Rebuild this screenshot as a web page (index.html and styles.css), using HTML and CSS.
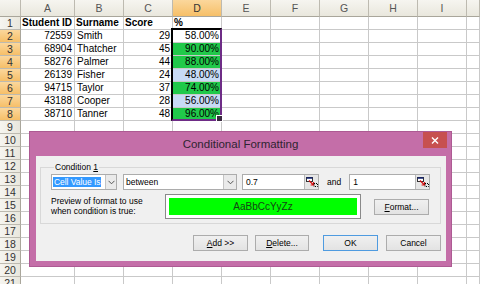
FILE: index.html
```html
<!DOCTYPE html>
<html lang="en">
<head>
    <meta charset="UTF-8">
    <meta name="viewport" content="width=device-width, initial-scale=1.0">
    <title>Conditional Formatting</title>
    <link rel="stylesheet" href="styles.css">
</head>
<body>
<div class="sheet">
    <div class="ch corner"></div><div class="ch">A</div><div class="ch">B</div><div class="ch">C</div><div class="ch hl">D</div><div class="ch">E</div><div class="ch">F</div><div class="ch">G</div><div class="ch">H</div><div class="ch">I</div><div class="ch"></div>
    <div class="rh">1</div><div class="bold">Student ID</div><div class="bold">Surname</div><div class="bold">Score</div><div class="bold">%</div><div></div><div></div><div></div><div></div><div></div><div></div>
    <div class="rh hl">2</div><div class="num">72559</div><div>Smith</div><div class="num">29</div><div class="num">58.00%</div><div></div><div></div><div></div><div></div><div></div><div></div>
    <div class="rh hl">3</div><div class="num">68904</div><div>Thatcher</div><div class="num">45</div><div class="num green">90.00%</div><div></div><div></div><div></div><div></div><div></div><div></div>
    <div class="rh hl">4</div><div class="num">58276</div><div>Palmer</div><div class="num">44</div><div class="num green">88.00%</div><div></div><div></div><div></div><div></div><div></div><div></div>
    <div class="rh hl">5</div><div class="num">26139</div><div>Fisher</div><div class="num">24</div><div class="num blue">48.00%</div><div></div><div></div><div></div><div></div><div></div><div></div>
    <div class="rh hl">6</div><div class="num">94715</div><div>Taylor</div><div class="num">37</div><div class="num green">74.00%</div><div></div><div></div><div></div><div></div><div></div><div></div>
    <div class="rh hl">7</div><div class="num">43188</div><div>Cooper</div><div class="num">28</div><div class="num blue">56.00%</div><div></div><div></div><div></div><div></div><div></div><div></div>
    <div class="rh hl">8</div><div class="num">38710</div><div>Tanner</div><div class="num">48</div><div class="num green">96.00%</div><div></div><div></div><div></div><div></div><div></div><div></div>
    <div class="rh">9</div><div></div><div></div><div></div><div></div><div></div><div></div><div></div><div></div><div></div><div></div>
    <div class="rh">10</div><div></div><div></div><div></div><div></div><div></div><div></div><div></div><div></div><div></div><div></div>
    <div class="rh">11</div><div></div><div></div><div></div><div></div><div></div><div></div><div></div><div></div><div></div><div></div>
    <div class="rh">12</div><div></div><div></div><div></div><div></div><div></div><div></div><div></div><div></div><div></div><div></div>
    <div class="rh">13</div><div></div><div></div><div></div><div></div><div></div><div></div><div></div><div></div><div></div><div></div>
    <div class="rh">14</div><div></div><div></div><div></div><div></div><div></div><div></div><div></div><div></div><div></div><div></div>
    <div class="rh">15</div><div></div><div></div><div></div><div></div><div></div><div></div><div></div><div></div><div></div><div></div>
    <div class="rh">16</div><div></div><div></div><div></div><div></div><div></div><div></div><div></div><div></div><div></div><div></div>
    <div class="rh">17</div><div></div><div></div><div></div><div></div><div></div><div></div><div></div><div></div><div></div><div></div>
    <div class="rh">18</div><div></div><div></div><div></div><div></div><div></div><div></div><div></div><div></div><div></div><div></div>
    <div class="rh">19</div><div></div><div></div><div></div><div></div><div></div><div></div><div></div><div></div><div></div><div></div>
    <div class="rh">20</div><div></div><div></div><div></div><div></div><div></div><div></div><div></div><div></div><div></div><div></div>
    <div class="rh">21</div><div></div><div></div><div></div><div></div><div></div><div></div><div></div><div></div><div></div><div></div>
    <span class="selection"></span>
</div>

<div class="dialog">
    <div class="titlebar">
        <span class="title">Conditional Formatting</span>
        <a href="javascript:;" class="close">
            <svg width="8" height="7" viewBox="0 0 8 7"><path d="M1 .5 7 6.5M7 .5 1 6.5" stroke="#fff" stroke-width="1.4"/></svg>
        </a>
    </div>
    <div class="client">
        <fieldset class="group">
            <legend>Condition <u>1</u></legend>
            <div class="cond">
                <div class="combo combo-op">
                    <span class="val"><span class="picked">Cell Value Is</span></span>
                    <span class="drop"><svg width="7" height="5" viewBox="0 0 7 5"><path d="M.5 .8 3.5 3.8 6.5 .8" fill="none" stroke="#555"/></svg></span>
                </div>
                <div class="combo combo-between">
                    <span class="val">between</span>
                    <span class="drop"><svg width="7" height="5" viewBox="0 0 7 5"><path d="M.5 .8 3.5 3.8 6.5 .8" fill="none" stroke="#555"/></svg></span>
                </div>
                <div class="field field-1">
                    <span class="val">0.7</span>
                    <span class="ref">
                        <svg width="12" height="10" viewBox="0 0 12 10"><rect x=".5" y=".5" width="6" height="4" fill="#fff" stroke="#333"/><path d="M.5 1h6" stroke="#102070" stroke-width="1.5"/><path d="M3 3.5 7 7.5M7.6 5v3h-3" fill="none" stroke="#d81010" stroke-width="1.2"/><rect x="8" y="6.5" width="3.5" height="3" fill="none" stroke="#000" stroke-dasharray="1 1"/></svg>
                    </span>
                </div>
                <span class="and">and</span>
                <div class="field field-2">
                    <span class="val">1</span>
                    <span class="ref">
                        <svg width="12" height="10" viewBox="0 0 12 10"><rect x=".5" y=".5" width="6" height="4" fill="#fff" stroke="#333"/><path d="M.5 1h6" stroke="#102070" stroke-width="1.5"/><path d="M3 3.5 7 7.5M7.6 5v3h-3" fill="none" stroke="#d81010" stroke-width="1.2"/><rect x="8" y="6.5" width="3.5" height="3" fill="none" stroke="#000" stroke-dasharray="1 1"/></svg>
                    </span>
                </div>
            </div>
            <div class="preview">
                <div class="plabel">Preview of format to use<br>when condition is true:</div>
                <div class="sample-box"><div class="sample">AaBbCcYyZz</div></div>
                <a href="javascript:;" class="btn btn-format"><u>F</u>ormat...</a>
            </div>
        </fieldset>
        <div class="buttons">
            <a href="javascript:;" class="btn btn-add"><u>A</u>dd &gt;&gt;</a>
            <a href="javascript:;" class="btn btn-delete"><u>D</u>elete...</a>
            <a href="javascript:;" class="btn btn-ok default">OK</a>
            <a href="javascript:;" class="btn btn-cancel">Cancel</a>
        </div>
    </div>
</div>
</body>
</html>
```

FILE: styles.css
```css
*{
    margin: 0;
    padding: 0;
    box-sizing: border-box;
}
body{
    width: 480px;
    height: 284px;
    overflow: hidden;
    position: relative;
    background: #fff;
    font-family: "Liberation Sans", Arial, sans-serif;
}

/* spreadsheet */
.sheet{
    display: grid;
    grid-template-columns: 21px 54px repeat(8, 49px) 13px;
    grid-template-rows: 17px;
    grid-auto-rows: 13px;
    font-size: 10px;
    line-height: 12px;
    color: #000;
    position: relative;
}
.sheet > div{
    border-right: 1px solid #c9c9c9;
    border-bottom: 1px solid #c9c9c9;
    padding: 0 2px;
    white-space: nowrap;
    overflow: hidden;
}
.sheet .ch{
    background: linear-gradient(#f6f5f0, #e9e7dd);
    border-right-color: #bdbab0;
    border-bottom-color: #a9a69b;
    text-align: center;
    color: #555;
    font-size: 10.5px;
    line-height: 16px;
}
.sheet .rh{
    background: linear-gradient(90deg, #f6f5f0, #e9e7dd);
    border-right-color: #a9a69b;
    border-bottom-color: #bdbab0;
    text-align: center;
    color: #333;
    font-size: 10.5px;
    padding: 0;
}
.sheet .hl{
    background: linear-gradient(#fbd79c, #f6bf68);
    color: #333;
}
.sheet .bold{
    font-weight: bold;
    padding-left: 1px;
}
.sheet .num{
    text-align: right;
}
.sheet .green{
    background: #20c94a;
}
.sheet .blue{
    background: #c7dbf5;
}
.selection{
    position: absolute;
    left: 171px;
    top: 28px;
    width: 51px;
    height: 93px;
    border: 2px solid #000;
    border-right-color: #6e2c86;
    border-bottom-color: #6e2c86;
}
.selection::after{
    content: "";
    position: absolute;
    right: -3px;
    bottom: -3px;
    width: 5px;
    height: 5px;
    background: #3a2a40;
    border: 1px solid #fff;
}

/* dialog */
.dialog{
    position: absolute;
    left: 29px;
    top: 131px;
    width: 423px;
    height: 136px;
    background: #c46ea8;
    border: 1px solid #ad5a93;
    display: flex;
    flex-direction: column;
    font-size: 8.5px;
    color: #000;
}
.titlebar{
    height: 24px;
    flex: none;
    display: grid;
    grid-template-columns: 1fr auto 1fr;
}
.title{
    grid-column: 2;
    font-size: 11.5px;
    line-height: 24px;
    color: #2e2430;
}
.close{
    grid-column: 3;
    justify-self: end;
    margin-right: 4px;
    width: 24px;
    height: 16px;
    background: #c75050;
    display: flex;
    align-items: center;
    justify-content: center;
}
.client{
    flex: 1;
    margin: 0 5px 5px 6px;
    padding: 0 5px 0 4px;
    background: #f0f0f0;
}
.group{
    margin-top: 6px;
    border: 1px solid #d8d8d8;
    padding: 2px 0 4px 10px;
}
.group legend{
    margin-left: 3px;
    padding: 0 1px;
    line-height: 10px;
}
.cond{
    display: flex;
    align-items: center;
    height: 16px;
}
.combo, .field{
    display: flex;
    height: 16px;
    background: #fff;
    border: 1px solid #acacac;
}
.val{
    flex: 1;
    padding: 0 2px;
    line-height: 14px;
    white-space: nowrap;
    overflow: hidden;
}
.combo-op{
    width: 66px;
}
.combo-op .val{
    padding: 0 0 0 1px;
}
.picked{
    background: #3399ff;
    color: #fff;
    padding: 0 1px;
    letter-spacing: -0.05px;
}
.combo-between{
    width: 114px;
    margin-left: 6px;
}
.drop{
    flex: none;
    width: 13px;
    border-left: 1px solid #c4c4c4;
    background: #eaeaea;
    display: flex;
    align-items: center;
    justify-content: center;
}
.combo-op .drop{
    width: 11px;
}
.field-1{
    width: 77px;
    margin-left: 5px;
}
.field-2{
    width: 81px;
}
.field .val{
    padding-left: 3px;
}
.ref{
    width: 14px;
    border-left: 1px solid #b8b8b8;
    background: #e6e6e6;
    display: flex;
    align-items: center;
    justify-content: center;
}
.and{
    margin: 0 8px;
    line-height: 14px;
}
.preview{
    display: flex;
    align-items: center;
    height: 25px;
    margin-top: 4px;
}
.plabel{
    width: 114px;
    line-height: 9.5px;
}
.sample-box{
    width: 196px;
    height: 25px;
    background: #fff;
    border: 1px solid #8a8a8a;
    padding: 3px;
}
.sample{
    height: 100%;
    background: #00ff00;
    text-align: center;
    font-size: 10px;
    line-height: 17px;
    color: #144414;
}
.btn{
    display: flex;
    align-items: center;
    justify-content: center;
    width: 55px;
    height: 16px;
    border: 1px solid #acacac;
    background: linear-gradient(#f0f0f0, #e3e3e3);
    color: #000;
    text-decoration: none;
    white-space: nowrap;
}
.btn-format{
    margin-left: 13px;
}
.buttons{
    display: flex;
    justify-content: flex-end;
    margin-top: 11px;
}
.btn-delete{
    width: 54px;
    margin-left: 7px;
}
.btn-ok{
    margin-left: 14px;
}
.btn-cancel{
    margin-left: 8px;
}
.default{
    border-color: #4f9be0;
}
```
